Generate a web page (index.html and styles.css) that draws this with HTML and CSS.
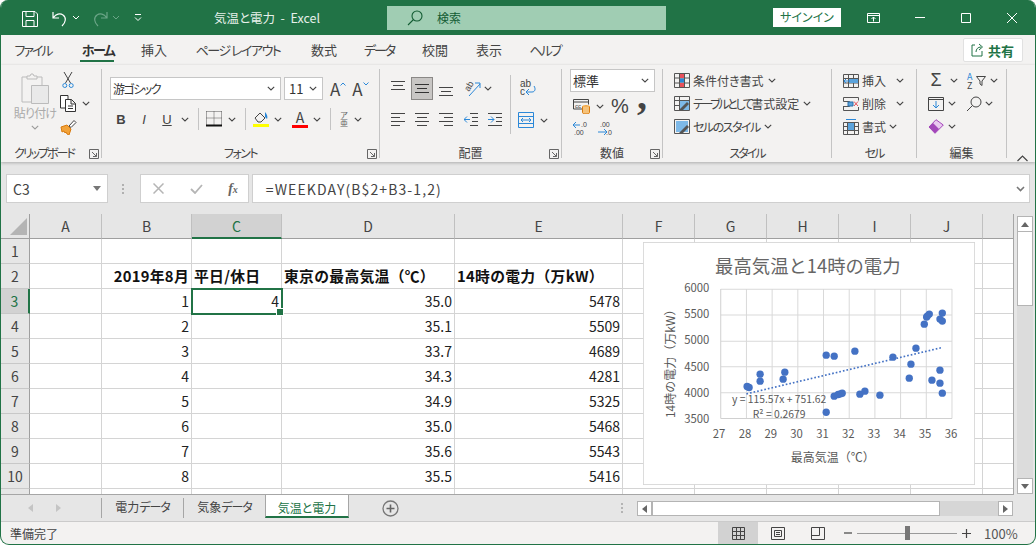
FILE: index.html
```html
<!DOCTYPE html>
<html lang="ja">
<head>
<meta charset="utf-8">
<title>気温と電力 - Excel</title>
<link rel="stylesheet" href="styles.css">
</head>
<body>
<svg class="defs" width="0" height="0"><symbol id="chev" viewBox="0 0 8 5"><path d="M.8.8 4 4 7.2.8" fill="none" stroke="#444" stroke-width="1.1"/></symbol><symbol id="lau" viewBox="0 0 10 10"><path d="M.5 9.5V.5h9v9z M3 3l4.5 4.5M4 7.5h3.5V4" fill="none" stroke="#666"/></symbol></svg>
<div class="app">
  <header class="titlebar">
    <svg class="t-save" width="16" height="16" viewBox="0 0 16 16"><path d="M.5.500h12.500l2.500 2.500v12.500H.5zM4 .500v5h8v-5M4 15.500v-6h8v6" fill="none" stroke="#fff"/></svg>
    <svg class="t-undo" width="16" height="16" viewBox="0 0 16 16"><path d="M1 1v6h6M1.500 6.500C4 3 8 2 11 4c3.500 2.500 3 7-1 11" fill="none" stroke="#fff" stroke-width="1.200"/></svg>
    <svg class="t-c1" width="8" height="5" viewBox="0 0 8 5"><path d="M1 1l3 3 3-3" fill="none" stroke="#fff"/></svg>
    <svg class="t-redo" width="16" height="16" viewBox="0 0 16 16"><path d="M15 1v6H9M14.500 6.500C12 3 8 2 5 4c-3.500 2.500-3 7 1 11" fill="none" stroke="#6ba587" stroke-width="1.200"/></svg>
    <svg class="t-c2" width="8" height="5" viewBox="0 0 8 5"><path d="M1 1l3 3 3-3" fill="none" stroke="#6ba587"/></svg>
    <svg class="t-c3" width="8" height="8" viewBox="0 0 8 8"><path d="M1 .5h6M1 3.500l3 3 3-3" fill="none" stroke="#fff"/></svg>
    <div class="t-name">気温と電力&nbsp; - &nbsp;Excel</div>
    <div class="t-search"><svg width="16" height="16" viewBox="0 0 16 16"><circle cx="10" cy="6" r="5" fill="none" stroke="#135c33" stroke-width="1.100"/><path d="M6.500 9.500 1 15" stroke="#135c33" stroke-width="1.100"/></svg><span>検索</span></div>
    <div class="t-signin">サインイン</div>
    <svg class="t-disp" width="13" height="10" viewBox="0 0 13 10"><path d="M.5.500h12v9H.5zM.5 2.500h12M6.500 8.500V4M4.500 6l2-2 2 2" fill="none" stroke="#fff"/></svg>
    <svg class="t-min" width="10" height="1" viewBox="0 0 10 1"><path d="M0 .5h10" stroke="#fff"/></svg>
    <svg class="t-max" width="10" height="10" viewBox="0 0 10 10"><path d="M.5.500h9v9h-9z" fill="none" stroke="#fff"/></svg>
    <svg class="t-close" width="10" height="10" viewBox="0 0 10 10"><path d="M0 0l10 10M10 0 0 10" stroke="#fff"/></svg>
  </header>

  <nav class="tabs">
    <span class="tab w64 n2">ファイル</span><span class="tab w66 on n15">ホーム</span><span class="tab w46">挿入</span><span class="tab w122 n15">ページ レイアウト</span><span class="tab w50">数式</span><span class="tab w60 n2">データ</span><span class="tab w52">校閲</span><span class="tab w56">表示</span><span class="tab w56 n2">ヘルプ</span>
    <div class="share"><svg width="14" height="14" viewBox="0 0 14 14"><path d="M4 2H1v11h10V8M5 9c0-3 2-5 5-5M8 1l3.500 3L8 7" fill="none" stroke="#217346"/></svg><b>共有</b></div>
  </nav>

  <section class="ribbon">
    <div class="grp g-clip">
      <div class="body">
        <div class="paste">
          <svg width="28" height="32" viewBox="0 0 28 32"><path d="M6 4H1v25h10M16 4h5v8M6 6V3h3l1-2h2l1 2h3v3z" fill="none" stroke="#bbb"/><path d="M10.500 12.500h17v18h-17z" fill="#e9e9e9" stroke="#bbb"/></svg>
          <span>貼り付け</span>
          <svg class="ch" width="8" height="5"><use href="#chev" opacity=".5"/></svg>
        </div>
        <div class="smalls">
          <div class="sr"><svg class="ml2" width="12" height="17" viewBox="0 0 12 17"><path d="M2 0l6.500 11M10 0 3.500 11" stroke="#444" fill="none"/><circle cx="2.800" cy="13.500" r="2" fill="none" stroke="#2b88d8"/><circle cx="9.200" cy="13.500" r="2" fill="none" stroke="#2b88d8"/></svg></div>
          <div class="sr"><svg width="17" height="17" viewBox="0 0 17 17"><path d="M5 13H.5V.5H8V4M5.500 4.500h6l4 4v8h-10zM11 4.500V9h4.500M8 11h5M8 13.500h5" fill="#fff" stroke="#333"/></svg><svg class="ml5" width="8" height="5"><use href="#chev"/></svg></div>
          <div class="sr"><svg width="17" height="16" viewBox="0 0 17 16"><path d="M1 8l6-2 4 4-2 6-2-1-1-2-1 1-1-2-2 1z" fill="#f2a33a" stroke="#d97a0d"/><path d="M9 7l5-5.500 2 2-5 5z" fill="#fff" stroke="#444"/></svg></div>
        </div>
      </div>
      <div class="lbl lbl-clip n2">クリップボード<svg class="lau" width="10" height="10"><use href="#lau"/></svg></div>
    </div>

    <div class="grp g-font">
      <div class="body col">
        <div class="fr r1">
          <div class="combo w171"><span class="n15">游ゴシック</span><svg width="8" height="5"><use href="#chev"/></svg></div>
          <div class="combo w39 ml3"><span class="num11">11</span><svg width="8" height="5"><use href="#chev"/></svg></div>
          <span class="big-a ml7">A<svg width="6" height="4" viewBox="0 0 6 4"><path d="M.5 3.500 3 1l2.500 2.500" fill="none" stroke="#2b88d8"/></svg></span>
          <span class="big-a ml6">A<svg width="6" height="4" viewBox="0 0 6 4"><path d="M.5.500 3 3 5.500.500" fill="none" stroke="#2b88d8"/></svg></span>
        </div>
        <div class="fr r2">
          <b class="fmt">B</b><i class="fmt ml7">I</i><u class="fmt ml7">U</u><svg class="ml6" width="8" height="5"><use href="#chev"/></svg>
          <i class="vsep ml9"></i>
          <svg class="ml7" width="16" height="16" viewBox="0 0 16 16"><path d="M.5.500h15M.5.500v13M15.500.500v13M8 .500v13M.5 7h15" fill="none" stroke="#555" stroke-dasharray="1 1"/><path d="M0 14.500h16" stroke="#111" stroke-width="2"/></svg><svg class="ml6" width="8" height="5"><use href="#chev"/></svg>
          <i class="vsep ml9"></i>
          <svg class="ml7" width="16" height="16" viewBox="0 0 16 16"><path d="M2 7 7 2l5 5-4 4H5z" fill="none" stroke="#444"/><path d="M12 1c2 2 3 5 2 7l-2-2z" fill="#2b88d8"/><path d="M0 13h16v3H0z" fill="#ffff00"/></svg><svg class="ml5" width="8" height="5"><use href="#chev"/></svg>
          <span class="fcolor ml10">A</span><svg class="ml5" width="8" height="5"><use href="#chev"/></svg>
          <i class="vsep ml9"></i>
          <span class="phon ml7">ア<br>亜</span><svg class="ml4" width="8" height="5"><use href="#chev"/></svg>
        </div>
      </div>
      <div class="lbl n15">フォント<svg class="lau" width="10" height="10"><use href="#lau"/></svg></div>
    </div>

    <div class="grp g-align">
      <div class="body">
        <div class="al-left">
          <div class="fr ar1">
            <svg class="al-t" width="14" height="9" viewBox="0 0 14 9"><path d="M0 .5h14M2 4.500h10M0 8.500h14" stroke="#444"/></svg>
            <span class="al-on"><svg width="14" height="9" viewBox="0 0 14 9"><path d="M0 .5h14M2 4.500h10M0 8.500h14" stroke="#333"/></svg></span>
            <svg class="al-b" width="14" height="9" viewBox="0 0 14 9"><path d="M0 .5h14M2 4.500h10M0 8.500h14" stroke="#444"/></svg>
            <svg class="ml10" width="18" height="17" viewBox="0 0 18 17"><text class="o-txt" x="0" y="0" transform="translate(6 12) rotate(-60)">ab</text><path d="M6 16 17 4M12 3h5v5" fill="none" stroke="#2b88d8"/></svg>
            <svg class="ml3" width="8" height="5"><use href="#chev"/></svg>
          </div>
          <div class="fr ar2">
            <svg width="14" height="13" viewBox="0 0 14 13"><path d="M0 .5h14M0 4.500h9M0 8.500h14M0 12.500h9" stroke="#444"/></svg>
            <svg class="ml10" width="14" height="13" viewBox="0 0 14 13"><path d="M0 .5h14M2 4.500h10M0 8.500h14M2 12.500h10" stroke="#444"/></svg>
            <svg class="ml10" width="14" height="13" viewBox="0 0 14 13"><path d="M0 .5h14M5 4.500h9M0 8.500h14M5 12.500h9" stroke="#444"/></svg>
            <svg class="ml11" width="14" height="13" viewBox="0 0 14 13"><path d="M6 .5h8M8 4.500h6M8 8.500h6M6 12.500h8" stroke="#444"/><path d="M0 6.500h6M3 3.500l-3 3 3 3" fill="none" stroke="#2b88d8"/></svg>
            <svg class="ml10" width="14" height="13" viewBox="0 0 14 13"><path d="M0 .5h14M8 4.500h6M8 8.500h6M0 12.500h14" stroke="#444"/><path d="M0 6.500h6M3 3.500l3 3-3 3" fill="none" stroke="#2b88d8"/></svg>
          </div>
        </div>
        <i class="vsep tall"></i>
        <div class="al-right">
          <svg class="wrap" width="16" height="17" viewBox="0 0 16 17"><text class="w-txt" x="0" y="7">ab</text><text class="w-txt" x="0" y="15">c</text><path d="M14 6c2 3 1 6-2 6H6M9 9l-3 3 3 3" fill="none" stroke="#2b88d8"/></svg>
          <div class="fr merge"><svg width="16" height="16" viewBox="0 0 16 16"><path d="M.5.500h15v15H.5zM.5 4.500h15M.5 11.500h15" fill="none" stroke="#2b88d8"/><path d="M3 8h10M5 6 3 8l2 2M11 6l2 2-2 2" fill="none" stroke="#2b88d8"/></svg><svg class="ml6" width="8" height="5"><use href="#chev"/></svg></div>
        </div>
      </div>
      <div class="lbl">配置<svg class="lau" width="10" height="10"><use href="#lau"/></svg></div>
    </div>

    <div class="grp g-num">
      <div class="body col">
        <div class="combo w85 numc"><span>標準</span><svg width="8" height="5"><use href="#chev"/></svg></div>
        <div class="fr nr2">
          <svg width="17" height="15" viewBox="0 0 17 15"><path d="M9 10H.5V.5h15v5M.5 3h15" fill="none" stroke="#444"/><text class="mini" x="2" y="9">cc</text><ellipse cx="13" cy="7.500" rx="3.500" ry="1.500" fill="#f2a33a"/><path d="M9.500 7.500v6c0 2 7 2 7 0v-6" fill="#f5c27a" stroke="#d97a0d"/></svg>
          <svg class="ml6" width="8" height="5"><use href="#chev"/></svg>
          <span class="pct ml7">%</span><span class="comma ml9">,</span>
        </div>
        <div class="fr nr3">
          <svg width="17" height="15" viewBox="0 0 17 15"><text class="mini2" x="8" y="6">.0</text><text class="mini2" x="1" y="14">.00</text><path d="M0 4h7M3 1 0 4l3 3" fill="none" stroke="#2b88d8"/></svg>
          <svg class="ml8" width="17" height="15" viewBox="0 0 17 15"><text class="mini2" x="2" y="6">.00</text><text class="mini2" x="8" y="14">.0</text><path d="M0 11h9M6 8l3 3-3 3" fill="none" stroke="#2b88d8"/></svg>
        </div>
      </div>
      <div class="lbl">数値<svg class="lau" width="10" height="10"><use href="#lau"/></svg></div>
    </div>

    <div class="grp g-style">
      <div class="body col stack">
        <div class="sr"><svg width="16" height="15" viewBox="0 0 16 15"><path d="M.5.500h15v14H.5zM5.500.500v14M10.500.500v14M.5 5h15M.5 10h15" fill="none" stroke="#555"/><path d="M6 1h4v4H6zM6 10h4v4H6z" fill="#e8505b"/><path d="M6 5.500h4v4H6z" fill="#2b88d8"/></svg><span>条件付き書式</span><svg class="ml4" width="8" height="5"><use href="#chev"/></svg></div>
        <div class="sr"><svg width="16" height="15" viewBox="0 0 16 15"><path d="M.5.500h15v14H.5zM.5 4.500h15M5.500.500v14M.5 9.500h15" fill="none" stroke="#555"/><path d="M6 5h9v9H6z" fill="#7db9e8"/><path d="M5 14 13 6l2 2-6 6z" fill="#555"/></svg><span><span class="n24">テーブルとして</span>書式設定</span><svg class="ml4" width="8" height="5"><use href="#chev"/></svg></div>
        <div class="sr"><svg width="16" height="15" viewBox="0 0 16 15"><path d="M.5.500h15v14H.5z" fill="none" stroke="#555"/><path d="M2 2h12v11H2z" fill="#7db9e8"/><path d="M5 14 13 6l2 2-6 6z" fill="#555"/></svg><span class="n15">セルのスタイル</span><svg class="ml4" width="8" height="5"><use href="#chev"/></svg></div>
      </div>
      <div class="lbl n2">スタイル</div>
    </div>

    <div class="grp g-cells">
      <div class="body col stack">
        <div class="sr"><svg width="16" height="14" viewBox="0 0 16 14"><path d="M.5.500h15v13H.5zM.5 4.500h15M.5 9h15M5.500.500v13M10.500.500v13" fill="none" stroke="#555"/><path d="M6 5h9v4H6z" fill="#5ba3dc"/><path d="M1 7h6M3 5 1 7l2 2" fill="none" stroke="#2b88d8"/></svg><span>挿入</span><svg class="ml10" width="8" height="5"><use href="#chev"/></svg></div>
        <div class="sr"><svg width="16" height="14" viewBox="0 0 16 14"><path d="M.5.500h15M.5 13.500h15M.5.500v4M.5 9v4.500M15.500.500v3M15.500 10v3.500M.5 4.500h6v5h-6" fill="none" stroke="#555"/><path d="M5 5h5v4H5z" fill="#5ba3dc" stroke="#2b6ea8"/><path d="M11 4.500l4 4.500M15 4.500l-4 4.500" stroke="#e8505b"/></svg><span>削除</span><svg class="ml10" width="8" height="5"><use href="#chev"/></svg></div>
        <div class="sr"><svg width="16" height="16" viewBox="0 0 16 16"><path d="M.5 3.500h15v12H.5zM.5 7.500h15M.5 11.500h15M4.500 3.500v12M11.500 3.500v12" fill="none" stroke="#555"/><path d="M5 4h6v7H5z" fill="#5ba3dc"/><path d="M3 .5h10" stroke="#2b88d8"/></svg><span>書式</span><svg class="ml3" width="8" height="5"><use href="#chev"/></svg></div>
      </div>
      <div class="lbl n2">セル</div>
    </div>

    <div class="grp g-edit">
      <div class="body col stack">
        <div class="sr"><span class="sig">Σ</span><svg class="ml6" width="8" height="5"><use href="#chev"/></svg><span class="az"><em>A</em><em>Z</em></span><svg width="10" height="10" viewBox="0 0 10 10"><path d="M.5.500h9L6 5v4.500L4 8V5z" fill="none" stroke="#444"/></svg><svg class="ml4" width="8" height="5"><use href="#chev"/></svg></div>
        <div class="sr"><svg width="16" height="14" viewBox="0 0 16 14"><path d="M.5.500h15v13H.5zM.5 2.500h15" fill="none" stroke="#444"/><path d="M8 4v7M5 8l3 3 3-3" fill="none" stroke="#2b88d8"/></svg><svg class="ml4" width="8" height="5"><use href="#chev"/></svg><svg class="ml10" width="16" height="16" viewBox="0 0 16 16"><circle cx="10" cy="6" r="5" fill="none" stroke="#444"/><path d="M6.500 9.500 1 15" stroke="#444"/></svg><svg class="ml3" width="8" height="5"><use href="#chev"/></svg></div>
        <div class="sr"><svg width="16" height="15" viewBox="0 0 16 15"><path d="M8 .7 15.300 6 7 14.300 1 8z" fill="#e9c8f0" stroke="#a347ba"/><path d="M1 8l4-4 6 6-4 4.300z" fill="#a347ba"/></svg><svg class="ml4" width="8" height="5"><use href="#chev"/></svg></div>
      </div>
      <div class="lbl">編集</div>
    </div>
    <svg class="collapse" width="11" height="7" viewBox="0 0 11 7"><path d="M.5 6 5.500 1l5 5" fill="none" stroke="#444" stroke-width="1.200"/></svg>
  </section>

  <section class="fbar">
    <div class="namebox"><span>C3</span><svg width="8" height="5" viewBox="0 0 8 5"><path d="M0 0h8L4 5z" fill="#777"/></svg></div>
    <svg class="dots" width="3" height="10" viewBox="0 0 3 10"><path d="M0 0h2v2H0zM0 4h2v2H0zM0 8h2v2H0z" fill="#b0b0b0"/></svg>
    <div class="fx">
      <svg width="11" height="11" viewBox="0 0 11 11"><path d="M.5.500l10 10M10.500.500l-10 10" stroke="#b5b5b5" stroke-width="1.500"/></svg>
      <svg width="13" height="10" viewBox="0 0 13 10"><path d="M1 5l4 4 7-8" fill="none" stroke="#b5b5b5" stroke-width="1.800"/></svg>
      <i class="fx-i">f<small>x</small></i>
    </div>
    <div class="finput"><span>=WEEKDAY(B$2+B3-1,2)</span><svg width="9" height="6" viewBox="0 0 9 6"><path d="M1 1l3.500 3.500L8 1" fill="none" stroke="#777" stroke-width="1.600"/></svg></div>
  </section>

  <section class="work">
    <div class="sheet">
      <table class="cells">
        <colgroup><col class="c0"><col class="c72"><col class="c90"><col class="c90"><col class="c173"><col class="c168"><col class="c72"><col class="c72"><col class="c72"><col class="c72"><col class="c72"><col class="c31"></colgroup>
        <tr class="head"><th class="corner"><svg width="17" height="17" viewBox="0 0 17 17"><path d="M17 0v17H0z" fill="#b4b4b4"/></svg></th><th>A</th><th>B</th><th class="hl">C</th><th>D</th><th>E</th><th>F</th><th>G</th><th>H</th><th>I</th><th>J</th><th></th></tr>
        <tr><th>1</th><td></td><td></td><td></td><td></td><td></td><td></td><td></td><td></td><td></td><td></td><td></td></tr>
        <tr><th>2</th><td></td><td class="bold r">2019年8月</td><td class="bold">平日/休日</td><td class="bold">東京の最高気温（℃）</td><td class="bold">14時の電力（万kW）</td><td></td><td></td><td></td><td></td><td></td><td></td></tr>
        <tr><th class="hr">3</th><td></td><td class="r">1</td><td class="r sel">4</td><td class="r">35.0</td><td class="r">5478</td><td></td><td></td><td></td><td></td><td></td><td></td></tr>
        <tr><th>4</th><td></td><td class="r">2</td><td></td><td class="r">35.1</td><td class="r">5509</td><td></td><td></td><td></td><td></td><td></td><td></td></tr>
        <tr><th>5</th><td></td><td class="r">3</td><td></td><td class="r">33.7</td><td class="r">4689</td><td></td><td></td><td></td><td></td><td></td><td></td></tr>
        <tr><th>6</th><td></td><td class="r">4</td><td></td><td class="r">34.3</td><td class="r">4281</td><td></td><td></td><td></td><td></td><td></td><td></td></tr>
        <tr><th>7</th><td></td><td class="r">5</td><td></td><td class="r">34.9</td><td class="r">5325</td><td></td><td></td><td></td><td></td><td></td><td></td></tr>
        <tr><th>8</th><td></td><td class="r">6</td><td></td><td class="r">35.0</td><td class="r">5468</td><td></td><td></td><td></td><td></td><td></td><td></td></tr>
        <tr><th>9</th><td></td><td class="r">7</td><td></td><td class="r">35.6</td><td class="r">5543</td><td></td><td></td><td></td><td></td><td></td><td></td></tr>
        <tr><th>10</th><td></td><td class="r">8</td><td></td><td class="r">35.5</td><td class="r">5416</td><td></td><td></td><td></td><td></td><td></td><td></td></tr>
        <tr><th></th><td></td><td></td><td></td><td></td><td></td><td></td><td></td><td></td><td></td><td></td><td></td></tr>
      </table>
      <svg class="chart" viewBox="8 22 995 728" width="332" height="243">
        <rect x="9" y="23" width="993" height="726" fill="#fff" stroke="#d6d6d6" stroke-width="3"/>
        <path class="gl" d="M241 163.500H934M241 241H934M241 319H934M241 396H934M241 474H934M318 163V551M395 163V551M472 163V551M549 163V551M626 163V551M703 163V551M780 163V551M857 163V551M934 163V551"/>
        <path class="ax" d="M241 163V551M241 551H934"/>
        <text class="c-title" x="502" y="114">最高気温と14時の電力</text>
        <g class="c-y">
          <text x="207" y="173">6000</text><text x="207" y="249">5500</text><text x="207" y="327">5000</text><text x="207" y="407">4500</text><text x="207" y="485">4000</text><text x="207" y="563">3500</text>
        </g>
        <g class="c-x">
          <text x="236" y="608">27</text><text x="314" y="608">28</text><text x="391" y="608">29</text><text x="468" y="608">30</text><text x="546" y="608">31</text><text x="623" y="608">32</text><text x="700" y="608">33</text><text x="777" y="608">34</text><text x="853" y="608">35</text><text x="931" y="608">36</text>
        </g>
        <text class="c-lab" x="577" y="680">最高気温（℃）</text>
        <text class="c-lab" transform="translate(104 378) rotate(-90)">14時の電力（万kW）</text>
        <g class="pts">
          <circle cx="320" cy="455" r="11"/><circle cx="326" cy="458" r="11"/><circle cx="359" cy="418" r="11"/><circle cx="359" cy="439" r="11"/><circle cx="428" cy="433" r="11"/><circle cx="433" cy="412" r="11"/><circle cx="557" cy="361" r="11"/><circle cx="581" cy="364" r="11"/><circle cx="557" cy="532" r="11"/><circle cx="581" cy="484" r="11"/><circle cx="593" cy="479" r="11"/><circle cx="600" cy="477" r="11"/><circle cx="605" cy="475" r="11"/><circle cx="643" cy="349" r="11"/><circle cx="658" cy="478" r="11"/><circle cx="673" cy="469" r="11"/><circle cx="718" cy="481" r="11"/><circle cx="757" cy="367" r="11"/><circle cx="806" cy="430" r="11"/><circle cx="811" cy="388" r="11"/><circle cx="826" cy="340" r="11"/><circle cx="851" cy="268" r="11"/><circle cx="858" cy="247" r="11"/><circle cx="866" cy="238" r="11"/><circle cx="860" cy="244" r="11"/><circle cx="874" cy="436" r="11"/><circle cx="898" cy="445" r="11"/><circle cx="898" cy="406" r="11"/><circle cx="898" cy="253" r="11"/><circle cx="905" cy="235" r="11"/><circle cx="905" cy="259" r="11"/><circle cx="905" cy="475" r="11"/>
        </g>
        <path class="trend" d="M318 477 905 338"/>
        <text class="c-eq" x="416" y="505">y = 115.57x + 751.62</text>
        <text class="c-eq" x="416" y="549">R² = 0.2679</text>
      </svg>
    </div>
    <div class="vscroll">
      <div class="sbtn"><svg width="8" height="5" viewBox="0 0 8 5"><path d="M4 0l4 5H0z" fill="#666"/></svg></div>
      <div class="vthumb"></div>
      <div class="vtrack"></div>
      <div class="sbtn"><svg width="8" height="5" viewBox="0 0 8 5"><path d="M0 0h8L4 5z" fill="#666"/></svg></div>
    </div>
  </section>

  <section class="tabbar">
    <div class="nav">
      <svg width="5" height="8" viewBox="0 0 5 8"><path d="M5 0v8L0 4z" fill="#c4c4c4"/></svg>
      <svg width="5" height="8" viewBox="0 0 5 8"><path d="M0 0v8l5-4z" fill="#c4c4c4"/></svg>
    </div>
    <div class="stab first">電力<span class="n1">データ</span></div>
    <div class="stab">気象<span class="n1">データ</span></div>
    <div class="stab act">気温と電力</div>
    <svg class="add" width="17" height="17" viewBox="0 0 17 17"><circle cx="8.500" cy="8.500" r="7.500" fill="none" stroke="#777" stroke-width="1.300"/><path d="M8.500 4.500v8M4.500 8.500h8" stroke="#666" stroke-width="1.600"/></svg>
    <svg class="hdots" width="3" height="10" viewBox="0 0 3 10"><path d="M0 0h2v2H0zM0 4h2v2H0zM0 8h2v2H0z" fill="#b4b4b4"/></svg>
    <div class="hscroll">
      <div class="sbtn"><svg width="5" height="8" viewBox="0 0 5 8"><path d="M5 0v8L0 4z" fill="#666"/></svg></div>
      <div class="hthumb"></div>
      <div class="htrack"></div>
      <div class="sbtn"><svg width="5" height="8" viewBox="0 0 5 8"><path d="M0 0v8l5-4z" fill="#666"/></svg></div>
    </div>
  </section>

  <footer class="status">
    <span class="ready">準備完了</span>
    <div class="views">
      <span class="vw on"><svg width="13" height="13" viewBox="0 0 13 13"><path d="M.5.500h12v12H.5zM.5 4.500h12M.5 8.500h12M4.500.500v12M8.500.500v12" fill="none" stroke="#444"/></svg></span>
      <span class="vw"><svg width="14" height="13" viewBox="0 0 14 13"><path d="M.5.500h13v12H.5zM3.500 3.500h7v6h-7zM5 5.500h4M5 7.500h4" fill="none" stroke="#444"/></svg></span>
      <span class="vw"><svg width="14" height="13" viewBox="0 0 14 13"><path d="M.5.500h13v12H.5zM.5 8.500h8V.5" fill="none" stroke="#444"/></svg></span>
    </div>
    <svg class="zm" width="8" height="2" viewBox="0 0 8 2"><path d="M0 1h8" stroke="#444" stroke-width="1.200"/></svg>
    <div class="slider"><i></i></div>
    <svg class="zp" width="9" height="9" viewBox="0 0 9 9"><path d="M0 4.500h9M4.500 0v9" stroke="#444" stroke-width="1.200"/></svg>
    <span class="zoom">100%</span>
  </footer>
</div>
</body>
</html>
```
FILE: styles.css
```css
* { box-sizing: border-box; }
html, body { margin: 0; padding: 0; background: #fff; }
body { width: 1036px; height: 545px; overflow: hidden; font-family: "Noto Sans CJK JP", "Noto Sans", sans-serif; font-size: 12px; color: #444; }
svg { display: block; flex: none; }
.defs { position: absolute; }
.app { width: 1036px; height: 545px; border: 1px solid #217346; border-top: 0; border-radius: 8px 8px 9px 9px; overflow: hidden; display: flex; flex-direction: column; background: #f3f2f1; }
.ml2 { margin-left: 2px; } .ml3 { margin-left: 3px; } .ml4 { margin-left: 4px; } .ml5 { margin-left: 5px; } .ml6 { margin-left: 6px; } .ml7 { margin-left: 7px; } .ml8 { margin-left: 8px; } .ml9 { margin-left: 9px; } .ml10 { margin-left: 10px; } .ml11 { margin-left: 11px; } .ml14 { margin-left: 14px; }
.n1 { letter-spacing: -1.100px; } .n15 { letter-spacing: -1.500px; } .n2 { letter-spacing: -2px; } .n24 { letter-spacing: -2.400px; }

/* title bar */
.titlebar { height: 35px; background: #217346; display: flex; align-items: center; color: #fff; flex: none; }
.t-save { margin-left: 21px; margin-top: 2px; }
.t-undo { margin-left: 14px; margin-top: 2px; }
.t-c1 { margin-left: 4px; }
.t-redo { margin-left: 12px; margin-top: 2px; }
.t-c2 { margin-left: 4px; }
.t-c3 { margin-left: 14px; }
.t-name { margin-left: 72px; width: 173px; font-size: 12.500px; font-feature-settings: "palt"; white-space: nowrap; color: #e6f0ea; }
.t-search { width: 279px; height: 24px; background: #a0cdb3; display: flex; align-items: center; padding-left: 20px; color: #135c33; }
.t-search span { margin-left: 14px; font-size: 12px; }
.t-signin { margin-left: 107px; width: 68px; height: 19px; background: #fff; color: #217346; text-align: center; line-height: 18px; font-size: 12px; font-feature-settings: "palt"; }
.t-disp { margin-left: 26px; }
.t-min { margin-left: 35px; }
.t-max { margin-left: 36px; }
.t-close { margin-left: 36px; }

/* tabs */
.tabs { height: 30px; display: flex; position: relative; flex: none; }
.tab { display: block; text-align: center; line-height: 30px; font-size: 13px; font-feature-settings: "palt"; color: #444; height: 30px; position: relative; white-space: nowrap; }
.w64 { width: 64px; } .w66 { width: 66px; } .w46 { width: 46px; } .w122 { width: 122px; } .w50 { width: 50px; } .w60 { width: 60px; } .w52 { width: 52px; } .w56 { width: 56px; }
.tab.on { font-weight: 700; color: #333; }
.tab.on::after { content: ""; position: absolute; left: 15px; width: 34px; top: 25px; height: 2px; background: #217346; }
.share { position: absolute; left: 962px; top: 3px; width: 60px; height: 24px; background: #fff; border: 1px solid #e1e1e1; border-radius: 2px; display: flex; align-items: center; padding-left: 7px; gap: 3px; color: #217346; font-size: 13px; }

/* ribbon */
.ribbon { height: 97px; padding-top: 4px; display: flex; flex: none; position: relative; z-index: 2; box-shadow: 0 1px 3px rgba(0,0,0,.25); }
.grp { height: 89px; border-right: 1px solid #c4c4c4; display: flex; flex-direction: column; flex: none; }
.g-clip { width: 101px; } .g-font { width: 278px; } .g-align { width: 182px; } .g-num { width: 101px; } .g-style { width: 169px; } .g-cells { width: 85px; } .g-edit { width: 90px; }
.body { height: 77px; display: flex; }
.col { flex-direction: column; }
.lbl { height: 12px; line-height: 14px; text-align: center; font-size: 12px; font-feature-settings: "palt"; position: relative; color: #444; white-space: nowrap; }
.lbl-clip { text-align: left; padding-left: 13px; }
.lau { position: absolute; right: 2px; top: 3px; }
.fr { display: flex; align-items: center; }
.sr { height: 23px; display: flex; align-items: center; font-feature-settings: "palt"; white-space: nowrap; }
.sr > span { margin-left: 3px; }

.paste { width: 59px; padding: 4px 0 0 9px; display: flex; flex-direction: column; align-items: center; color: #aaa; font-feature-settings: "palt"; white-space: nowrap; }
.paste span { width: 45px; text-align: center; letter-spacing: -.8px; margin-top: -1px; }
.paste .ch { margin-top: 4px; }

.combo { height: 23px; background: #fff; border: 1px solid #c6c6c6; display: flex; align-items: center; justify-content: space-between; padding: 0 5px 0 2px; color: #333; font-feature-settings: "palt"; }
.w171 { width: 171px; } .w39 { width: 39px; } .w85 { width: 85px; }
.num11 { margin-left: 2px; font-size: 13px; }
.g-font .body { padding-left: 8px; }
.r1 { margin-top: 8px; }
.r2 { margin-top: 8px; height: 22px; padding-left: 3px; }
.big-a { font-size: 17px; line-height: 22px; color: #444; display: flex; align-items: flex-start; }
.big-a svg { margin-top: 4px; }
.fmt { width: 16px; text-align: center; font-size: 13px; font-family: "Liberation Sans", sans-serif; color: #444; }
.vsep { display: block; width: 1px; height: 22px; background: #c4c4c4; }
.fcolor { width: 16px; height: 18px; font-size: 14px; line-height: 14px; text-align: center; border-bottom: 3px solid #ff0000; color: #444; }
.phon { font-size: 8px; line-height: 8px; width: 12px; text-align: center; color: #666; }

.al-left { width: 130px; padding-left: 11px; }
.ar1 { height: 23px; margin-top: 8px; }
.al-t { margin-top: -7px; }
.al-on { width: 22px; height: 23px; margin-left: 6px; background: #c8c6c4; border: 1px solid #8a8886; display: flex; align-items: center; justify-content: center; }
.al-b { margin-left: 6px; margin-top: 5px; }
.ar2 { height: 22px; margin-top: 8px; }
.tall { height: 59px; margin-top: 6px; }
.al-right { padding: 11px 0 0 9px; display: flex; flex-direction: column; }
.wrap { overflow: visible; }
.merge { margin-top: 15px; margin-left: -2px; }
.o-txt { font: 9px "Liberation Sans", sans-serif; fill: #444; }
.w-txt { font: 10px "Liberation Sans", sans-serif; fill: #444; }
.mini { font: 6px "Liberation Sans", sans-serif; fill: #444; }
.mini2 { font: 7px "Liberation Sans", sans-serif; fill: #444; }

.g-num .body { padding-left: 8px; }
.numc { height: 23px; font-size: 13px; }
.nr2 { height: 22px; margin-top: 3px; padding-left: 3px; }
.nr3 { height: 22px; padding-left: 3px; }
.pct { font-size: 20px; line-height: 22px; color: #444; font-family: "Liberation Sans", sans-serif; width: 17px; }
.comma { font-size: 40px; line-height: 22px; font-weight: 700; color: #444; font-family: "Liberation Serif", serif; transform: translateY(-10px); }

.g-style .body { padding-left: 11px; }
.g-cells .body { padding-left: 11px; }
.g-edit .body { padding-left: 11px; }
.sig { font-size: 18px; font-family: "Liberation Sans", sans-serif; width: 16px; text-align: center; }
.sr > .sig { margin-left: 0; }
.sr > .az { display: flex; flex-direction: column; width: 9px; font-size: 9px; line-height: 9px; margin-left: 9px; }
.az em { font-style: normal; }
.az em:first-child { color: #2b88d8; }
.collapse { margin: 86px 0 0 10px; }

/* formula bar */
.fbar { height: 52px; background: #e6e6e6; display: flex; padding: 12px 5px 0 5px; flex: none; }
.namebox { width: 102px; height: 29px; background: #fff; border: 1px solid #cfcfcf; display: flex; align-items: center; justify-content: space-between; padding: 0 6px; font-size: 14px; color: #444; }
.dots { margin: 10px 0 0 14px; }
.fx { width: 109px; height: 29px; margin-left: 15px; background: #fff; border: 1px solid #cfcfcf; display: flex; align-items: center; justify-content: space-between; padding: 0 10px 0 12px; }
.fx-i { font: italic 700 14px "Liberation Serif", serif; color: #666; }
.fx-i small { font-size: 10px; }
.finput { width: 779px; height: 29px; margin-left: 3px; background: #fff; border: 1px solid #cfcfcf; display: flex; align-items: center; justify-content: space-between; padding: 0 4px 0 13px; font-size: 14px; letter-spacing: 1.100px; color: #444; }

/* sheet */
.work { height: 281px; background: #e6e6e6; display: flex; flex: none; }
.sheet { width: 1013px; height: 281px; position: relative; overflow: hidden; background: #fff; border-right: 1px solid #a6a6a6; border-bottom: 1px solid #a6a6a6; }
.cells { table-layout: fixed; width: 1012px; border-collapse: separate; border-spacing: 0; font-size: 14px; color: #222; }
.c0 { width: 29px; } .c72 { width: 72px; } .c90 { width: 90px; } .c173 { width: 173px; } .c168 { width: 168px; } .c31 { width: 31px; }
.cells tr { height: 25px; }
.cells th { height: 25px; padding: 0; font-weight: 400; background: #e6e6e6; color: #444; border-right: 1px solid #9f9f9f; border-bottom: 1px solid #c8c8c8; text-align: center; }
.cells td { height: 25px; padding: 0 2px; border-right: 1px solid #d4d4d4; border-bottom: 1px solid #d4d4d4; white-space: nowrap; overflow: visible; line-height: 20px; }
.head th { border-right: 1px solid #c0c0c0; border-bottom: 1px solid #9f9f9f; }
.cells .corner { border-right-color: #9f9f9f; }
.corner svg { margin-left: 9px; }
.head th.hl { background: #d2d2d2; color: #217346; border-bottom: 2px solid #217346; }
.cells th.hr { background: #d2d2d2; color: #217346; border-right: 2px solid #217346; }
.r { text-align: right; }
.bold { font-weight: 700; color: #111; font-size: 14.800px; letter-spacing: .3px; }
.sel { position: relative; outline: 2px solid #217346; outline-offset: -1px; }
.sel::after { content: ""; position: absolute; right: -3px; bottom: -3px; width: 6px; height: 6px; background: #217346; border: 1px solid #fff; z-index: 1; }
.chart { position: absolute; left: 642px; top: 28px; }
.gl { stroke: #d9d9d9; stroke-width: 3; fill: none; }
.ax { stroke: #d0d0d0; stroke-width: 3; fill: none; }
.c-title { font-size: 55px; fill: #666; text-anchor: middle; }
.c-y text { font-size: 34px; fill: #595959; text-anchor: end; }
.c-x text { font-size: 34px; fill: #595959; text-anchor: middle; }
.c-lab { font-size: 36px; fill: #595959; text-anchor: middle; text-spacing-trim: space-all; }
.c-eq { font-size: 31px; fill: #595959; text-anchor: middle; }
.pts circle { fill: #4472c4; }
.trend { stroke: #4472c4; stroke-width: 5; stroke-dasharray: 5 6; fill: none; }

.vscroll { margin: 2px 0 0 3px; width: 16px; display: flex; flex-direction: column; }
.sbtn { width: 16px; height: 16px; background: #fff; border: 1px solid #b4b4b4; display: flex; align-items: center; justify-content: center; flex: none; }
.vthumb { height: 74px; background: #fff; border: 1px solid #b4b4b4; border-top: 0; }
.vtrack { height: 172px; background: #dcdcdc; }

/* tab bar */
.tabbar { height: 27px; background: #e6e6e6; display: flex; border-bottom: 1px solid #cbcbcb; flex: none; font-size: 12px; }
.nav { width: 100px; display: flex; padding: 9px 0 0 27px; gap: 23px; }
.stab { width: 82px; height: 20px; margin-top: 3px; border-left: 1px solid #a6a6a6; text-align: center; line-height: 18px; font-feature-settings: "palt"; color: #444; }
.stab.act { height: 24px; margin-top: -1px; width: 84px; background: #fff; color: #217346; border-left: 1px solid #a6a6a6; border-right: 1px solid #a6a6a6; border-bottom: 2px solid #217346; line-height: 27px; }
.add { margin: 5px 0 0 33px; }
.hdots { margin: 8px 0 0 222px; }
.hscroll { display: flex; margin: 6px 0 0 13px; height: 15px; }
.hscroll .sbtn { width: 15px; height: 15px; }
.hthumb { width: 288px; background: #fff; border: 1px solid #b4b4b4; }
.htrack { width: 58px; background: #d6d6d6; }

/* status */
.status { height: 22px; display: flex; align-items: center; flex: 1; position: relative; }
.ready { margin-left: 9px; width: 708px; font-feature-settings: "palt"; }
.views { display: flex; height: 100%; }
.vw { height: 100%; display: flex; align-items: center; justify-content: center; width: 40px; }
.vw.on { background: #d2d2d2; }
.zm { margin-left: 6px; }
.slider { width: 100px; height: 1px; background: #9a9a9a; margin-left: 5px; position: relative; }
.slider i { position: absolute; left: 48px; top: -7px; width: 5px; height: 14px; background: #777; }
.zp { margin-left: 5px; }
.zoom { margin-left: 13px; font-size: 13px; color: #555; }
```
